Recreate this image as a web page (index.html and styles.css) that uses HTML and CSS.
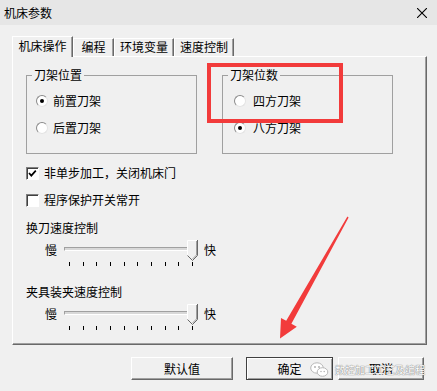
FILE: index.html
```html
<!DOCTYPE html>
<html lang="zh-CN">
<head>
  <meta charset="UTF-8">
  <meta name="viewport" content="width=device-width, initial-scale=1.0">
  <title>机床参数</title>
  <link rel="stylesheet" href="styles.css">
</head>
<body>
  <div class="window">
    <div class="titlebar">
      <span class="title">机床参数</span>
      <svg class="close" width="10" height="10" viewBox="0 0 10 10">
        <path d="M0 0L10 10M10 0L0 10" stroke="#000" stroke-width="1.1"/>
      </svg>
    </div>

    <div class="tabs">
      <div class="tab active">机床操作</div>
      <div class="tab tab-short">编程</div>
      <div class="tab">环境变量</div>
      <div class="tab">速度控制</div>
    </div>

    <div class="panel">
      <div class="groups">
        <fieldset class="group">
          <legend>刀架位置</legend>
          <div class="option"><span class="radio checked"></span>前置刀架</div>
          <div class="option"><span class="radio"></span>后置刀架</div>
        </fieldset>
        <fieldset class="group group-count">
          <legend>刀架位数</legend>
          <div class="option"><span class="radio"></span>四方刀架</div>
          <div class="option"><span class="radio checked"></span>八方刀架</div>
        </fieldset>
      </div>

      <div class="check-row">
        <span class="checkbox">
          <svg width="11" height="11" viewBox="0 0 11 11">
            <path d="M2 5L4.3 7.6L8.8 2.6" fill="none" stroke="#000" stroke-width="1.7"/>
          </svg>
        </span>
        非单步加工，关闭机床门
      </div>
      <div class="check-row"><span class="checkbox"></span>程序保护开关常开</div>

      <!-- speed sliders -->
      <div class="speed">
        <div class="speed-label">换刀速度控制</div>
        <div class="slider">
          <span class="slow">慢</span>
          <div class="track-wrap">
            <div class="track"></div>
            <svg class="thumb" width="11" height="21" viewBox="0 0 11 21">
              <path d="M0.5 0.5H10.5V15.5L5.5 20.5L0.5 15.5Z" fill="#f0f0f0"/>
              <path d="M0.5 15.5V0.5H10" fill="none" stroke="#fff"/>
              <path d="M9.5 1V15L5.5 19" fill="none" stroke="#a0a0a0"/>
              <path d="M10.5 0V15.5L5.5 20.5L0.5 15.5" fill="none" stroke="#696969"/>
            </svg>
          </div>
          <span class="fast">快</span>
        </div>
        <div class="ticks"><i></i><i></i><i></i><i></i><i></i><i></i><i></i><i></i><i></i><i></i></div>
      </div>

      <div class="speed">
        <div class="speed-label">夹具装夹速度控制</div>
        <div class="slider">
          <span class="slow">慢</span>
          <div class="track-wrap">
            <div class="track"></div>
            <svg class="thumb" width="11" height="21" viewBox="0 0 11 21">
              <path d="M0.5 0.5H10.5V15.5L5.5 20.5L0.5 15.5Z" fill="#f0f0f0"/>
              <path d="M0.5 15.5V0.5H10" fill="none" stroke="#fff"/>
              <path d="M9.5 1V15L5.5 19" fill="none" stroke="#a0a0a0"/>
              <path d="M10.5 0V15.5L5.5 20.5L0.5 15.5" fill="none" stroke="#696969"/>
            </svg>
          </div>
          <span class="fast">快</span>
        </div>
        <div class="ticks"><i></i><i></i><i></i><i></i><i></i><i></i><i></i><i></i><i></i><i></i></div>
      </div>
    </div>

    <div class="buttons">
      <button class="btn btn-wide">默认值</button>
      <button class="btn btn-default">确定</button>
      <button class="btn">取消</button>
    </div>

    <!-- annotations drawn over the dialog -->
    <div class="mark-box"></div>
    <svg class="arrow" width="437" height="391" viewBox="0 0 437 391">
      <polygon points="347.4,216.6 286.2,320.8 281,317.9 280,338.5 296.8,326.8 291.4,323.8 348.6,217.4" fill="#f23b3b"/>
    </svg>
    <div class="watermark">
      <svg class="wechat" width="19" height="16" viewBox="0 0 19 16">
        <ellipse cx="7" cy="6" rx="6.3" ry="5.2" fill="#fff" stroke="#b8b8b8"/>
        <ellipse cx="12.5" cy="10" rx="5.3" ry="4.3" fill="#fff" stroke="#b8b8b8"/>
        <circle cx="5" cy="5" r="0.9" fill="#aaa"/>
        <circle cx="9" cy="5" r="0.9" fill="#aaa"/>
        <circle cx="11" cy="9.5" r="0.7" fill="#aaa"/>
        <circle cx="14.2" cy="9.5" r="0.7" fill="#aaa"/>
      </svg>
      <span>数控加工工艺及编程</span>
    </div>
  </div>
</body>
</html>
```

FILE: styles.css
```css
/* Base */
body {
  margin: 0;
  background-color: #f0f0f0;
  font-family: "Noto Sans CJK SC", "Liberation Sans", sans-serif;
  font-size: 12px;
  line-height: 14px;
  color: #000;
}

.window {
  position: relative;
  width: 437px;
  height: 391px;
  overflow: hidden;
}

/* Title bar */
.titlebar {
  display: flex;
  align-items: center;
  justify-content: space-between;
  height: 25px;
  padding: 0 10px 0 4px;
  background-color: #e6e6e6;
}

/* Tabs */
.tabs {
  display: flex;
  align-items: flex-end;
  height: 31px;
  padding-left: 12px;
}

.tab {
  box-sizing: border-box;
  width: 60px;
  height: 18px;
  line-height: 16px;
  text-align: center;
  border-top: 1px solid #fff;
  border-left: 1px solid #fff;
  border-right: 1px solid #696969;
  box-shadow: inset -1px 0 #a0a0a0;
}

.tab-short {
  width: 41px;
}

.tab.active {
  position: relative;
  z-index: 1;
  width: 61px;
  height: 21px;
  line-height: 18px;
  margin-bottom: -1px;
  background-color: #f0f0f0;
}

/* Tab page */
.panel {
  box-sizing: border-box;
  height: 289px;
  margin: 0 10px 0 12px;
  border: 1px solid;
  border-color: #fff #696969 #696969 #fff;
  box-shadow: inset -1px -1px #a0a0a0;
}

.groups {
  display: flex;
  gap: 25px;
  margin: 11px 0 0 13px;
}

.group {
  box-sizing: border-box;
  width: 171px;
  margin: 0;
  padding: 12px 0 18px 9px;
  border: 1px solid #a0a0a0;
}

.group legend {
  margin-left: -4px;
  padding: 0 2px;
}

.group-count {
  padding-left: 11px;
}

.group-count legend {
  margin-left: -6px;
}

.group-count .option {
  gap: 7px;
}

.option {
  display: flex;
  align-items: center;
  gap: 5px;
  height: 14px;
}

.option + .option {
  margin-top: 13px;
}

.radio {
  position: relative;
  box-sizing: border-box;
  width: 12px;
  height: 12px;
  border-radius: 50%;
  border: 1px solid;
  border-color: #8a8a8a #e3e3e3 #e3e3e3 #8a8a8a;
  background-color: #fff;
}

.radio.checked::after {
  content: '';
  position: absolute;
  left: 3px;
  top: 3px;
  width: 4px;
  height: 4px;
  border-radius: 50%;
  background-color: #000;
}

/* Check boxes */
.check-row {
  display: flex;
  align-items: center;
  gap: 5px;
  height: 14px;
  margin: 12px 0 0 13px;
}

.check-row + .check-row {
  margin-top: 13px;
}

.checkbox {
  display: flex;
  align-items: center;
  justify-content: center;
  box-sizing: border-box;
  width: 13px;
  height: 13px;
  border: 1px solid;
  border-color: #808080 #fff #fff #808080;
  box-shadow: inset 1px 1px #404040;
  background-color: #fff;
}

/* Speed sliders */
.speed {
  margin: 14px 0 0 13px;
}

.speed + .speed {
  margin-top: 19px;
}

.slider {
  display: flex;
  align-items: center;
  height: 20px;
  margin-top: 5px;
}

.slow {
  margin: 0 7px 0 19px;
}

.fast {
  margin-left: 6px;
}

.track-wrap {
  position: relative;
  width: 134px;
  height: 20px;
}

.track {
  box-sizing: border-box;
  height: 4px;
  margin-top: 7px;
  border: 1px solid;
  border-color: #a0a0a0 #fff #fff #a0a0a0;
  background-color: #d8d8d8;
}

.thumb {
  position: absolute;
  top: 0;
  right: 0;
}

.ticks {
  display: flex;
  justify-content: space-between;
  width: 124px;
  margin: 2px 0 0 43px;
}

.ticks i {
  width: 1px;
  height: 4px;
  background-color: #000;
}

/* Dialog buttons */
.buttons {
  display: flex;
  padding: 12px 0 0 131px;
}

.btn {
  box-sizing: border-box;
  width: 86px;
  height: 23px;
  padding: 0;
  font: inherit;
  color: #000;
  background-color: #f0f0f0;
  border: 1px solid;
  border-color: #fff #696969 #696969 #fff;
  box-shadow: inset -1px -1px #a0a0a0;
}

.btn-wide {
  width: 102px;
  margin-right: 13px;
}

.btn-default {
  width: 87px;
  margin-right: 5px;
  border-color: #404040;
  box-shadow: inset 1px 1px #fff, inset -1px -1px #a0a0a0;
}

/* Annotations */
.mark-box {
  position: absolute;
  left: 207px;
  top: 63px;
  width: 128px;
  height: 52px;
  border: 4px solid #f23b3b;
}

.arrow {
  position: absolute;
  left: 0;
  top: 0;
}

.watermark {
  position: absolute;
  left: 310px;
  top: 362px;
  display: flex;
  align-items: center;
  gap: 6px;
  font-size: 10px;
  color: #fff;
  text-shadow: 0 0 1px #777, 0 0 1px #777;
}
```
